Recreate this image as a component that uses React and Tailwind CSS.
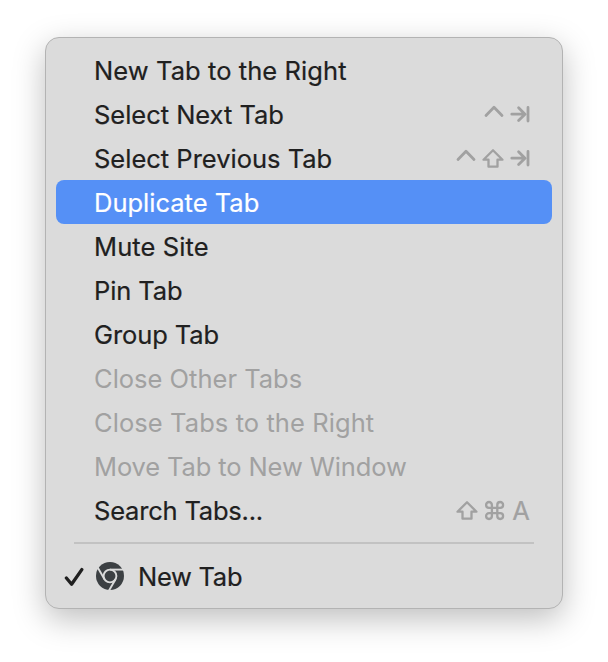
import clsx from 'clsx';

const items = [
  { label: 'New Tab to the Right', spacing: 'tracking-[0.08px]' },
  { label: 'Select Next Tab', spacing: 'tracking-[-0.03px]', keys: ['control', 'tab'] },
  { label: 'Select Previous Tab', spacing: 'tracking-[0px]', keys: ['control', 'shift', 'tab'] },
  { label: 'Duplicate Tab', spacing: 'tracking-[0px]', active: true },
  { label: 'Mute Site', spacing: 'tracking-[0.1px]' },
  { label: 'Pin Tab', spacing: 'tracking-[-0.1px]' },
  { label: 'Group Tab', spacing: 'tracking-[-0.1px]' },
  { label: 'Close Other Tabs', spacing: 'tracking-[0px]', disabled: true },
  { label: 'Close Tabs to the Right', spacing: 'tracking-[0.08px]', disabled: true },
  { label: 'Move Tab to New Window', spacing: 'tracking-[-0.12px]', disabled: true },
  { label: 'Search Tabs...', spacing: 'tracking-[-0.2px]', keys: ['shift', 'command', 'A'], tight: true },
];

const keyPaths = {
  control: 'M4 12.4 12 4.2 20 12.4',
  shift: 'M11 3.3 1.5 12.7H6.5V19.7H15.5V12.7H20.5Z',
  tab: 'M1.8 11.2H14.8M8.6 4.8 15 11.2 8.6 17.6M18 4.4V18',
  command:
    'M8.9 8.8V5.9A2.9 2.9 0 1 0 6 8.8H17.2A2.9 2.9 0 1 0 14.3 5.9V17.1A2.9 2.9 0 1 0 17.2 14.2H6A2.9 2.9 0 1 0 8.9 17.1Z',
};

function Key({ name }) {
  if (!keyPaths[name]) {
    return <span className="w-[22px] pt-[2px] text-center">{name}</span>;
  }
  return (
    <svg
      className="h-[22px] w-[22px] overflow-visible"
      viewBox="0 0 22 22"
      fill="none"
      stroke="currentColor"
      strokeWidth={name === 'control' || name === 'tab' ? 2.8 : 2.3}
      strokeLinecap="round"
      strokeLinejoin="round"
    >
      <path d={keyPaths[name]} />
    </svg>
  );
}

function MenuItem({ label, spacing, keys, active, disabled, tight }) {
  return (
    <li
      className={clsx(
        'flex h-11 items-center justify-between rounded-lg pr-5 pl-[38px]',
        active && 'bg-[#5590f6] text-white',
        disabled && 'text-[#a1a1a1] [-webkit-text-stroke-width:0px]',
      )}
    >
      <span className={clsx('pt-[2px] whitespace-nowrap', spacing)}>{label}</span>
      {keys && (
        <span className={clsx('flex items-center text-[#a1a1a1]', tight ? 'gap-[5px]' : 'gap-[6px]')}>
          {keys.map((key) => (
            <Key key={key} name={key} />
          ))}
        </span>
      )}
    </li>
  );
}

function CheckIcon() {
  return (
    <svg
      className="h-5 w-5"
      viewBox="0 0 20 20"
      fill="none"
      stroke="currentColor"
      strokeWidth="3.3"
      strokeLinecap="round"
      strokeLinejoin="round"
    >
      <path d="M2.4 12 7.6 18.2 17.8 3.6" />
    </svg>
  );
}

function ChromeIcon() {
  return (
    <svg className="h-7 w-7" viewBox="-14 -14 28 28" fill="none">
      <circle r="14" fill="#3c4043" />
      <g stroke="#dbdbdb" strokeWidth="1.9">
        <circle r="6.4" />
        <path d="M0-6.4H14" />
        <path d="M0-6.4H14" transform="rotate(120)" />
        <path d="M0-6.4H14" transform="rotate(240)" />
      </g>
    </svg>
  );
}

export default function App() {
  return (
    <div className="h-[662px] w-[608px] overflow-hidden bg-white pt-[37px] pl-[45px] font-['Inter',sans-serif] text-[25.5px] text-[#202020] [-webkit-text-stroke:0.2px_currentColor]">
      <div className="h-[572px] w-[518px] rounded-[14px] border border-[#b3b3b3] bg-[#dbdbdb] p-[10px] shadow-[0_10px_32px_rgba(0,0,0,0.26)]">
        <ul>
          {items.map((item) => (
            <MenuItem key={item.label} {...item} />
          ))}
        </ul>
        <div className="mx-[18px] my-[10px] h-[2px] bg-[#c2c2c2]" />
        <div className="flex h-11 items-center pl-2">
          <CheckIcon />
          <span className="ml-3">
            <ChromeIcon />
          </span>
          <span className="ml-[14px] pt-[2px] tracking-[-0.28px]">New Tab</span>
        </div>
      </div>
    </div>
  );
}
